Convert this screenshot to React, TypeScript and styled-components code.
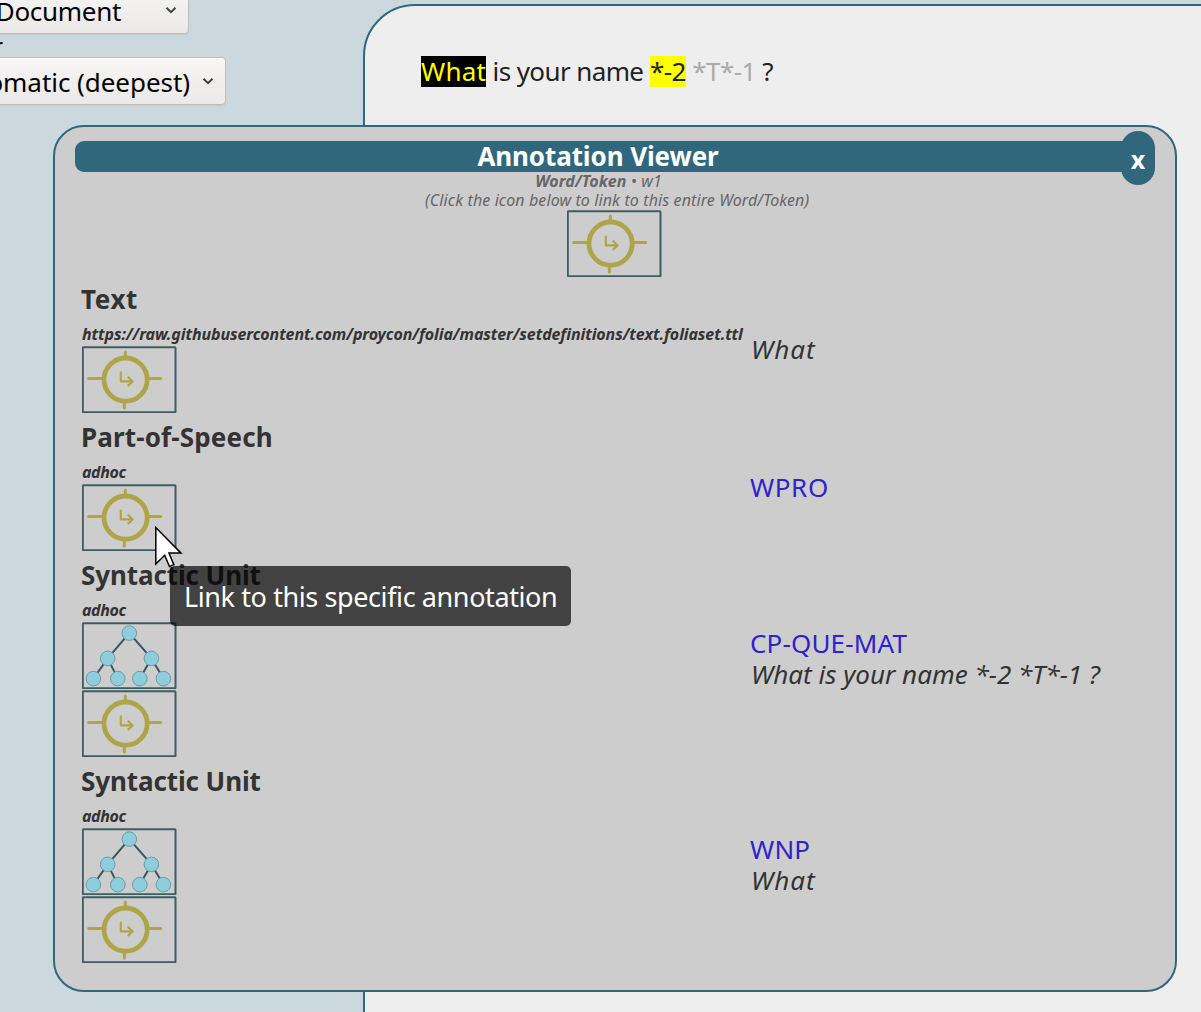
import React from 'react';
import styled, { createGlobalStyle } from 'styled-components';

const GlobalStyle = createGlobalStyle`
  * { box-sizing: border-box; }
  body {
    margin: 0;
    overflow: hidden;
    background: #cbd8de;
    font-family: "Noto Sans", "Open Sans", sans-serif;
    font-size: 26px;
    color: #333;
  }
`;

/* Letter spacing in pixels, shared by all text parts. */
type Tracked = { $track?: number };

const Page = styled.div`
  position: relative;
  display: grid;
  grid-template-columns: 363px 1fr;
  width: 100%;
  height: 1012px;
  overflow: hidden;
`;

const Sidebar = styled.aside`
  display: flex;
  flex-direction: column;
  align-items: flex-start;
  overflow: hidden;
  color: #000;
`;

const Select = styled.div<{ $width: number; $gap: number }>`
  display: flex;
  flex: none;
  align-items: center;
  justify-content: flex-end;
  gap: ${(p) => p.$gap}px;
  width: ${(p) => p.$width}px;
  height: 48px;
  margin-left: -80px;
  padding: 0 11px 0 0;
  white-space: nowrap;
  border: 1px solid #c6bbb2;
  border-radius: 4px;
  background: linear-gradient(#f7f6f4, #ebe9e7);
  box-shadow: inset 0 1px 0 #fff, 0 1px 1px rgba(0, 0, 0, 0.05);

  &:first-child {
    margin-top: -14px;
  }
`;

const SelectText = styled.span<Tracked>`
  line-height: 30px;
  padding-top: 1px;
  letter-spacing: ${(p) => p.$track ?? 0}px;
`;

const SidebarLabel = styled.div`
  display: flex;
  justify-content: flex-end;
  width: 3px;
  height: 23px;
  font-size: 25px;
  line-height: 25px;
`;

const DocumentPanel = styled.main`
  height: 1100px;
  margin: 4px -10px 0 0;
  padding: 52px 0 0 56px;
  border: 2px solid #30677c;
  border-radius: 52px 0 0 0;
  background: #eee;
`;

const Sentence = styled.div`
  display: flex;
  gap: 6.5px;
  margin-top: -2px;
  color: #222;
  line-height: 31px;
  white-space: pre;
`;

const Token = styled.span<Tracked & { $bg?: string; $color?: string }>`
  letter-spacing: ${(p) => p.$track ?? 0}px;
  background: ${(p) => p.$bg ?? 'transparent'};
  color: ${(p) => p.$color ?? 'inherit'};
`;

const Viewer = styled.section`
  position: absolute;
  left: 53px;
  top: 125px;
  width: 1124px;
  height: 867px;
  padding: 14px 20px 0;
  border: 2px solid #30677c;
  border-radius: 31px;
  background: #cdcdcd;
`;

const Header = styled.header`
  display: flex;
  align-items: flex-start;
  height: 31px;
`;

const Title = styled.h1`
  flex: 1;
  height: 31px;
  margin: 0;
  padding-right: 17px;
  border-radius: 9px;
  background: #30677c;
  color: #fff;
  font-size: 26px;
  line-height: 30px;
  letter-spacing: -0.1px;
  text-align: center;
`;

const CloseButton = styled.button`
  width: 34px;
  height: 54px;
  margin: -10px 0 0 -17px;
  padding: 3px 0 0;
  border: 0;
  border-radius: 17px;
  background: #30677c;
  color: #fff;
  font: 700 25px/51px "Noto Sans", sans-serif;
`;

const Intro = styled.div`
  display: flex;
  flex-direction: column;
  align-items: center;
  color: #666;
  font-size: 16px;
  font-style: italic;
  line-height: 19px;
  white-space: pre;
`;

const IntroLine = styled.div<Tracked & { $inset?: number }>`
  padding-right: ${(p) => p.$inset ?? 0}px;
  letter-spacing: ${(p) => p.$track ?? 0}px;
`;

const IntroIcon = styled.div`
  height: 67px;
  padding-right: 1px;
`;

const Annotations = styled.div`
  display: flex;
  flex-direction: column;
  gap: 8px;
  padding: 7px 0 0 6px;
`;

const Annotation = styled.article`
  display: grid;
  grid-template-columns: 669px 1fr;
  align-items: center;
`;

const Heading = styled.h2<Tracked>`
  margin: 0 0 10px;
  font-size: 26px;
  line-height: 30px;
  letter-spacing: ${(p) => p.$track ?? 0}px;
`;

const SetName = styled.div<Tracked>`
  padding-left: 1px;
  font-size: 16px;
  font-style: italic;
  font-weight: 700;
  line-height: 20px;
  letter-spacing: ${(p) => p.$track ?? 0}px;
  white-space: nowrap;
`;

const Icons = styled.div`
  display: flex;
  flex-direction: column;
  gap: 1px;
  padding: 2px 0 1px 1px;
`;

const Values = styled.div`
  line-height: 31px;
  white-space: nowrap;
`;

const ClassName = styled.div<Tracked>`
  color: #2f22cc;
  letter-spacing: ${(p) => p.$track ?? 0}px;
`;

const Quote = styled.div<Tracked>`
  padding-left: 1px;
  font-style: italic;
  letter-spacing: ${(p) => p.$track ?? 0}px;
`;

const IconSvg = styled.svg`
  display: block;
  width: 95px;
  height: 67px;
`;

const Tooltip = styled.div`
  position: absolute;
  left: 170px;
  top: 566px;
  width: 401px;
  height: 60px;
  padding: 2px 0 0 14px;
  border-radius: 5px;
  background: rgba(0, 0, 0, 0.68);
  color: #fff;
  font-size: 27px;
  line-height: 58px;
  letter-spacing: -0.4px;
  white-space: nowrap;
`;

const Pointer = styled.svg`
  position: absolute;
  left: 150px;
  top: 522px;
  width: 36px;
  height: 50px;
`;

const Frame = () => (
  <rect x="0.7" y="0.7" width="92.7" height="65" rx="0.8" fill="none" stroke="#3f5c63" strokeWidth="2" />
);

const TargetIcon = () => (
  <IconSvg viewBox="0 0 95 67">
    <g transform="translate(0.1 0.6)" fill="none" stroke="#ada548" strokeLinecap="round" strokeLinejoin="round">
      <Frame />
      <circle cx="43.5" cy="33" r="21.6" strokeWidth="4.8" />
      <path d="M43.2 5.4V11M42.2 56v5.3M6.5 31.8H21M67 31.8h11.6" strokeWidth="3" />
      <path d="M38.7 26v8.8h11.6M46.2 30.6l4.4 4.2-4.4 4" strokeWidth="2.1" />
    </g>
  </IconSvg>
);

const nodes = [
  [47.2, 10.5],
  [25.6, 35.8],
  [69.3, 35.8],
  [11.3, 56],
  [35.7, 56],
  [57.7, 56],
  [81.3, 56],
];

const TreeIcon = () => (
  <IconSvg viewBox="0 0 95 67">
    <g transform="translate(0.1 0.6)">
      <Frame />
      <path
        d="M25.6 35.8L47.2 10.5L69.3 35.8M11.3 56L25.6 35.8L35.7 56M57.7 56L69.3 35.8L81.3 56"
        fill="none"
        stroke="#3b565e"
        strokeWidth="2"
      />
      {nodes.map(([x, y]) => (
        <circle key={`${x}-${y}`} cx={x} cy={y} r="7.3" fill="#8dcddc" stroke="#6d9ba6" strokeWidth="1" />
      ))}
    </g>
  </IconSvg>
);

const Chevron = () => (
  <svg width="12" height="8" viewBox="0 0 12 8">
    <path d="M1.5 1.8L6 6.1l4.5-4.3" fill="none" stroke="#3a4144" strokeWidth="2" />
  </svg>
);

type Entry = {
  heading: string;
  headingTrack: number;
  set: string;
  setTrack: number;
  tree?: boolean;
  value?: string;
  valueTrack?: number;
  quote?: string;
  quoteTrack?: number;
};

const entries: Entry[] = [
  {
    heading: 'Text',
    headingTrack: 0.6,
    set: 'https://raw.githubusercontent.com/proycon/folia/master/setdefinitions/text.foliaset.ttl',
    setTrack: -0.1,
    quote: 'What',
    quoteTrack: 1,
  },
  { heading: 'Part-of-Speech', headingTrack: 0.15, set: 'adhoc', setTrack: -0.4, value: 'WPRO', valueTrack: 0.6 },
  {
    heading: 'Syntactic Unit',
    headingTrack: -0.1,
    set: 'adhoc',
    setTrack: -0.4,
    tree: true,
    value: 'CP-QUE-MAT',
    valueTrack: 0.15,
    quote: 'What is your name *-2 *T*-1 ?',
    quoteTrack: 0,
  },
  {
    heading: 'Syntactic Unit',
    headingTrack: -0.1,
    set: 'adhoc',
    setTrack: -0.4,
    tree: true,
    value: 'WNP',
    valueTrack: 0.2,
    quote: 'What',
    quoteTrack: 1,
  },
];

export default function App() {
  return (
    <Page>
      <GlobalStyle />
      <Sidebar>
        <Select $width={269} $gap={44}>
          <SelectText $track={-0.3}>Document</SelectText>
          <Chevron />
        </Select>
        <SidebarLabel>r</SidebarLabel>
        <Select $width={306} $gap={12}>
          <SelectText $track={-0.05}>Automatic (deepest)</SelectText>
          <Chevron />
        </Select>
      </Sidebar>

      <DocumentPanel>
        <Sentence>
          <Token $track={0.2} $bg="#000" $color="#ff0">What</Token>
          <Token $track={-0.6}>is your name</Token>
          <Token $track={-0.55} $bg="#ff0">*-2</Token>
          <Token $track={-0.6} $color="#aaa">*T*-1</Token>
          <Token>?</Token>
        </Sentence>
      </DocumentPanel>

      <Viewer>
        <Header>
          <Title>Annotation Viewer</Title>
          <CloseButton>x</CloseButton>
        </Header>
        <Intro>
          <IntroLine $inset={33} $track={0.12}>
            <b>Word/Token</b> • w1
          </IntroLine>
          <IntroLine $track={0.11}> (Click the icon below to link to this entire Word/Token)</IntroLine>
          <IntroIcon>
            <TargetIcon />
          </IntroIcon>
        </Intro>
        <Annotations>
          {entries.map((e, i) => (
            <Annotation key={i}>
              <div>
                <Heading $track={e.headingTrack}>{e.heading}</Heading>
                <SetName $track={e.setTrack}>{e.set}</SetName>
                <Icons>
                  {e.tree && <TreeIcon />}
                  <TargetIcon />
                </Icons>
              </div>
              <Values>
                {e.value && <ClassName $track={e.valueTrack}>{e.value}</ClassName>}
                {e.quote && <Quote $track={e.quoteTrack}>{e.quote}</Quote>}
              </Values>
            </Annotation>
          ))}
        </Annotations>
      </Viewer>

      <Tooltip>Link to this specific annotation</Tooltip>
      <Pointer viewBox="150 522 36 50">
        <path
          d="M155.8 527.5V564l8.9-8.7 4.8 11.3 4.3-1.9-4.8-11.6h12Z"
          fill="#fff"
          stroke="#000"
          strokeWidth="1.5"
        />
      </Pointer>
    </Page>
  );
}
